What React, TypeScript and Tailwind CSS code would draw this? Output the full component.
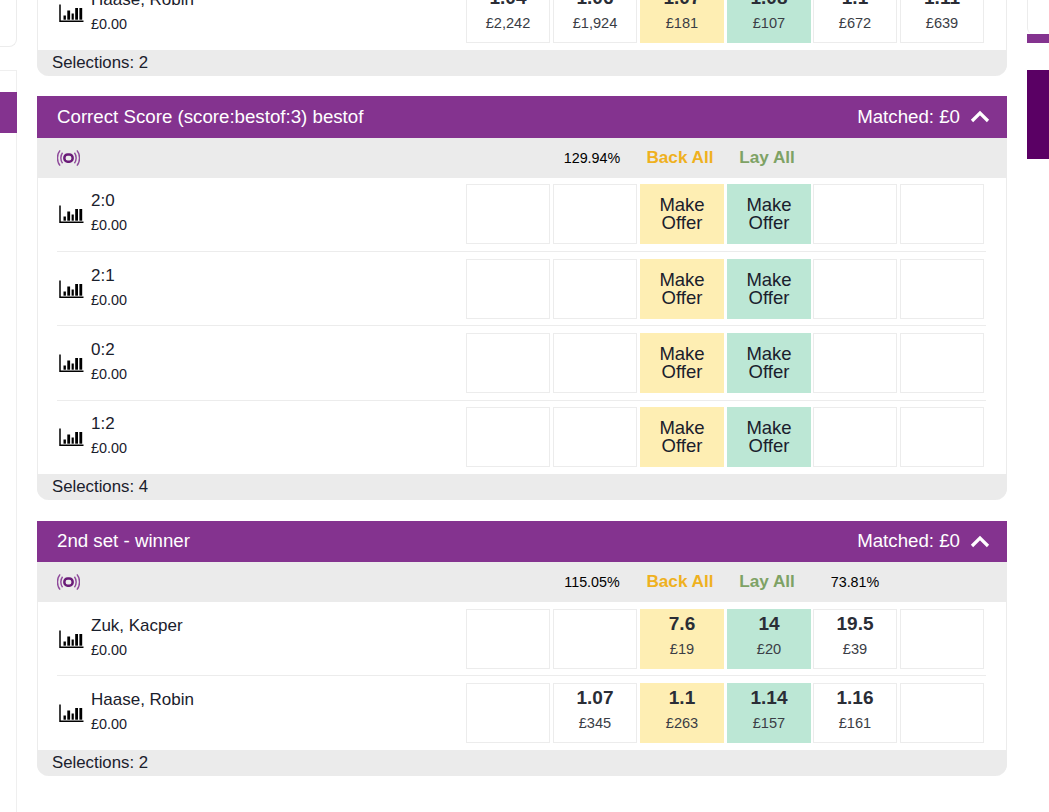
const cellBase = "w-[84px] h-[60px] flex flex-col items-center justify-center shrink-0";

type Cell = { odds?: string; size?: string; offer?: boolean } | null;

function StatsIcon() {
  return (
    <svg width="25" height="19" viewBox="0 0 25 19" className="shrink-0 text-black" fill="none">
      <path d="M1 0.5V17.3H24.5" stroke="currentColor" strokeWidth="1.5" />
      <rect x="4.5" y="11.5" width="2.4" height="4.2" fill="currentColor" />
      <rect x="8.3" y="6.5" width="2.8" height="9.2" fill="currentColor" />
      <rect x="12.6" y="9.5" width="2.2" height="6.2" fill="currentColor" />
      <rect x="16.2" y="4" width="2.8" height="11.7" fill="currentColor" />
      <rect x="20.4" y="4" width="2.8" height="11.7" fill="currentColor" />
    </svg>
  );
}

function LiveIcon() {
  return (
    <svg width="23" height="18" viewBox="0 0 24 18" fill="none" className="shrink-0">
      <rect x="7.7" y="5.4" width="8.6" height="7.4" rx="3.4" stroke="#6a1b78" strokeWidth="2.6" />
      <path d="M5.8 3.5C3.4 6.5 3.4 11.5 5.8 14.5" stroke="#8f4a9b" strokeWidth="1.5" />
      <path d="M3.2 1C-0.4 5.5 -0.4 12.5 3.2 17" stroke="#8f4a9b" strokeWidth="1.5" />
      <path d="M18.2 3.5C20.6 6.5 20.6 11.5 18.2 14.5" stroke="#8f4a9b" strokeWidth="1.5" />
      <path d="M20.8 1C24.4 5.5 24.4 12.5 20.8 17" stroke="#8f4a9b" strokeWidth="1.5" />
    </svg>
  );
}

function Chevron() {
  return (
    <svg width="20" height="13" viewBox="0 0 20 13" fill="none" className="shrink-0">
      <path d="M2 11L10 3L18 11" stroke="white" strokeWidth="3.2" />
    </svg>
  );
}

function PriceCell({ cell, kind, pull }: { cell: Cell; kind: "plain" | "back" | "lay"; pull: boolean }) {
  const tone =
    kind === "back"
      ? "bg-[#feeeb3] border border-[#feeeb3]"
      : kind === "lay"
        ? "bg-[#bce7d5] border border-[#bce7d5]"
        : "bg-white border border-[#ececec]";
  return (
    <div className={`${cellBase} ${tone} ${pull ? "-ml-[1px]" : ""}`}>
      {cell?.offer ? (
        <span className="text-[18.5px] leading-[18.5px] text-center text-[#1a202c]">
          Make
          <br />
          Offer
        </span>
      ) : cell ? (
        <div className="flex flex-col items-center pb-[8px]">
          <span className="text-[19px] leading-[22px] font-bold text-[#2a2d36]">{cell.odds}</span>
          <span className="text-[14.6px] leading-[18px] mt-[5px] text-[#3a3d45]">{cell.size}</span>
        </div>
      ) : null}
    </div>
  );
}

type RowData = { name: string; cells: Cell[]; top: string; bottom: string };

function Row({ name, cells, last, top, bottom }: RowData & { last?: boolean }) {
  return (
    <div className={`ml-[19px] mr-[20px] flex ${top} ${bottom} ${last ? "" : "border-b border-[#ececec]"}`}>
      <div className="w-[409px] flex items-center pl-[2px] gap-[7px] shrink-0">
        <div className="mt-[1px]">
          <StatsIcon />
        </div>
        <div className="flex flex-col pb-[4px]">
          <span className="text-[17px] leading-[20px] text-[#1a202c]">{name}</span>
          <span className="text-[14.4px] leading-[18px] mt-[5px] text-[#1a202c]">£0.00</span>
        </div>
      </div>
      <div className="flex gap-[3px]">
        {cells.map((c, i) => (
          <PriceCell key={i} cell={c} pull={i === 4} kind={i === 2 ? "back" : i === 3 ? "lay" : "plain"} />
        ))}
      </div>
    </div>
  );
}

function Market({
  title,
  left,
  right,
  rows,
  count,
  headerHeight,
}: {
  title: string;
  left: string;
  right?: string;
  rows: RowData[];
  count: number;
  headerHeight: string;
}) {
  return (
    <section className="border-x border-[#ececec] rounded-b-[12px]">
      <header className={`-mx-px ${headerHeight} bg-[#84338f] text-white flex items-center justify-between pl-[20px] pr-[17px]`}>
        <span className="text-[18.7px]">{title}</span>
        <span className="flex items-center gap-[10px] text-[18.7px]">
          Matched: £0
          <Chevron />
        </span>
      </header>
      <div className="-mx-px h-[40px] bg-[#ebebeb] flex items-center pl-[20px]">
        <LiveIcon />
        <span className="ml-[476px] w-[72px] text-[14.3px] text-center text-black mt-[1px]">{left}</span>
        <span className="ml-[10px] w-[84px] text-[17.2px] font-bold text-center text-[#efb11f] -mt-[1px]">Back All</span>
        <span className="ml-[3px] w-[84px] text-[17.2px] font-bold text-center text-[#7ea265] -mt-[1px]">Lay All</span>
        {right ? <span className="ml-[4px] w-[84px] text-[14.3px] text-center text-black mt-[1px]">{right}</span> : null}
      </div>
      {rows.map((r, i) => (
        <Row key={r.name} {...r} last={i === rows.length - 1} />
      ))}
      <div className="-mx-px h-[26px] bg-[#ebebeb] rounded-b-[12px] pl-[15px] flex items-center text-[16.8px] text-[#1a202c]">
        Selections: {count}
      </div>
    </section>
  );
}

const offer: Cell[] = [null, null, { offer: true }, { offer: true }, null, null];

export default function App() {
  return (
    <div
      className="h-[812px] w-[1049px] overflow-hidden flex bg-white"
      style={{ fontFamily: '"Liberation Sans", Arial, sans-serif' }}
    >
      <aside className="w-[37px] shrink-0 flex flex-col">
        <div className="w-[17px] h-[47px] border-r border-b border-[#ececec] rounded-br-[8px] shrink-0" />
        <div className="w-[17px] mt-[23px] flex-1 border-t border-r border-[#efefef] pt-[21px]">
          <div className="h-[41px] -mr-px bg-[#84338f]" />
        </div>
      </aside>

      <main className="w-[970px] shrink-0 flex flex-col justify-end pb-[36px]">
        <Market
          title="Match Odds"
          left="101.10%"
          count={2}
          headerHeight="h-[42px]"
          rows={[
            {
              name: "Haase, Robin",
              top: "pt-[7px]",
              bottom: "pb-[7px]",
              cells: [
                { odds: "1.04", size: "£2,242" },
                { odds: "1.06", size: "£1,924" },
                { odds: "1.07", size: "£181" },
                { odds: "1.08", size: "£107" },
                { odds: "1.1", size: "£672" },
                { odds: "1.11", size: "£639" },
              ],
            },
          ]}
        />
        <div className="mt-[20px]">
          <Market
            title="Correct Score (score:bestof:3) bestof"
            left="129.94%"
            count={4}
            headerHeight="h-[42px]"
            rows={[
              { name: "2:0", top: "pt-[6px]", bottom: "pb-[7px]", cells: offer },
              { name: "2:1", top: "pt-[7px]", bottom: "pb-[6px]", cells: offer },
              { name: "0:2", top: "pt-[7px]", bottom: "pb-[7px]", cells: offer },
              { name: "1:2", top: "pt-[6px]", bottom: "pb-[7px]", cells: offer },
            ]}
          />
        </div>
        <div className="mt-[21px]">
          <Market
            title="2nd set - winner"
            left="115.05%"
            right="73.81%"
            count={2}
            headerHeight="h-[41px]"
            rows={[
              {
                name: "Zuk, Kacper",
                top: "pt-[7px]",
                bottom: "pb-[6px]",
                cells: [
                  null,
                  null,
                  { odds: "7.6", size: "£19" },
                  { odds: "14", size: "£20" },
                  { odds: "19.5", size: "£39" },
                  null,
                ],
              },
              {
                name: "Haase, Robin",
                top: "pt-[7px]",
                bottom: "pb-[7px]",
                cells: [
                  null,
                  { odds: "1.07", size: "£345" },
                  { odds: "1.1", size: "£263" },
                  { odds: "1.14", size: "£157" },
                  { odds: "1.16", size: "£161" },
                  null,
                ],
              },
            ]}
          />
        </div>
      </main>

      <aside className="ml-[20px] w-[22px] shrink-0 flex flex-col">
        <div className="h-[34px] border-l border-[#ececec] rounded-bl-[6px] shrink-0" />
        <div className="h-[9px] bg-[#84338f] shrink-0" />
        <div className="h-[89px] mt-[27px] bg-[#5a0064] shrink-0" />
      </aside>
    </div>
  );
}
